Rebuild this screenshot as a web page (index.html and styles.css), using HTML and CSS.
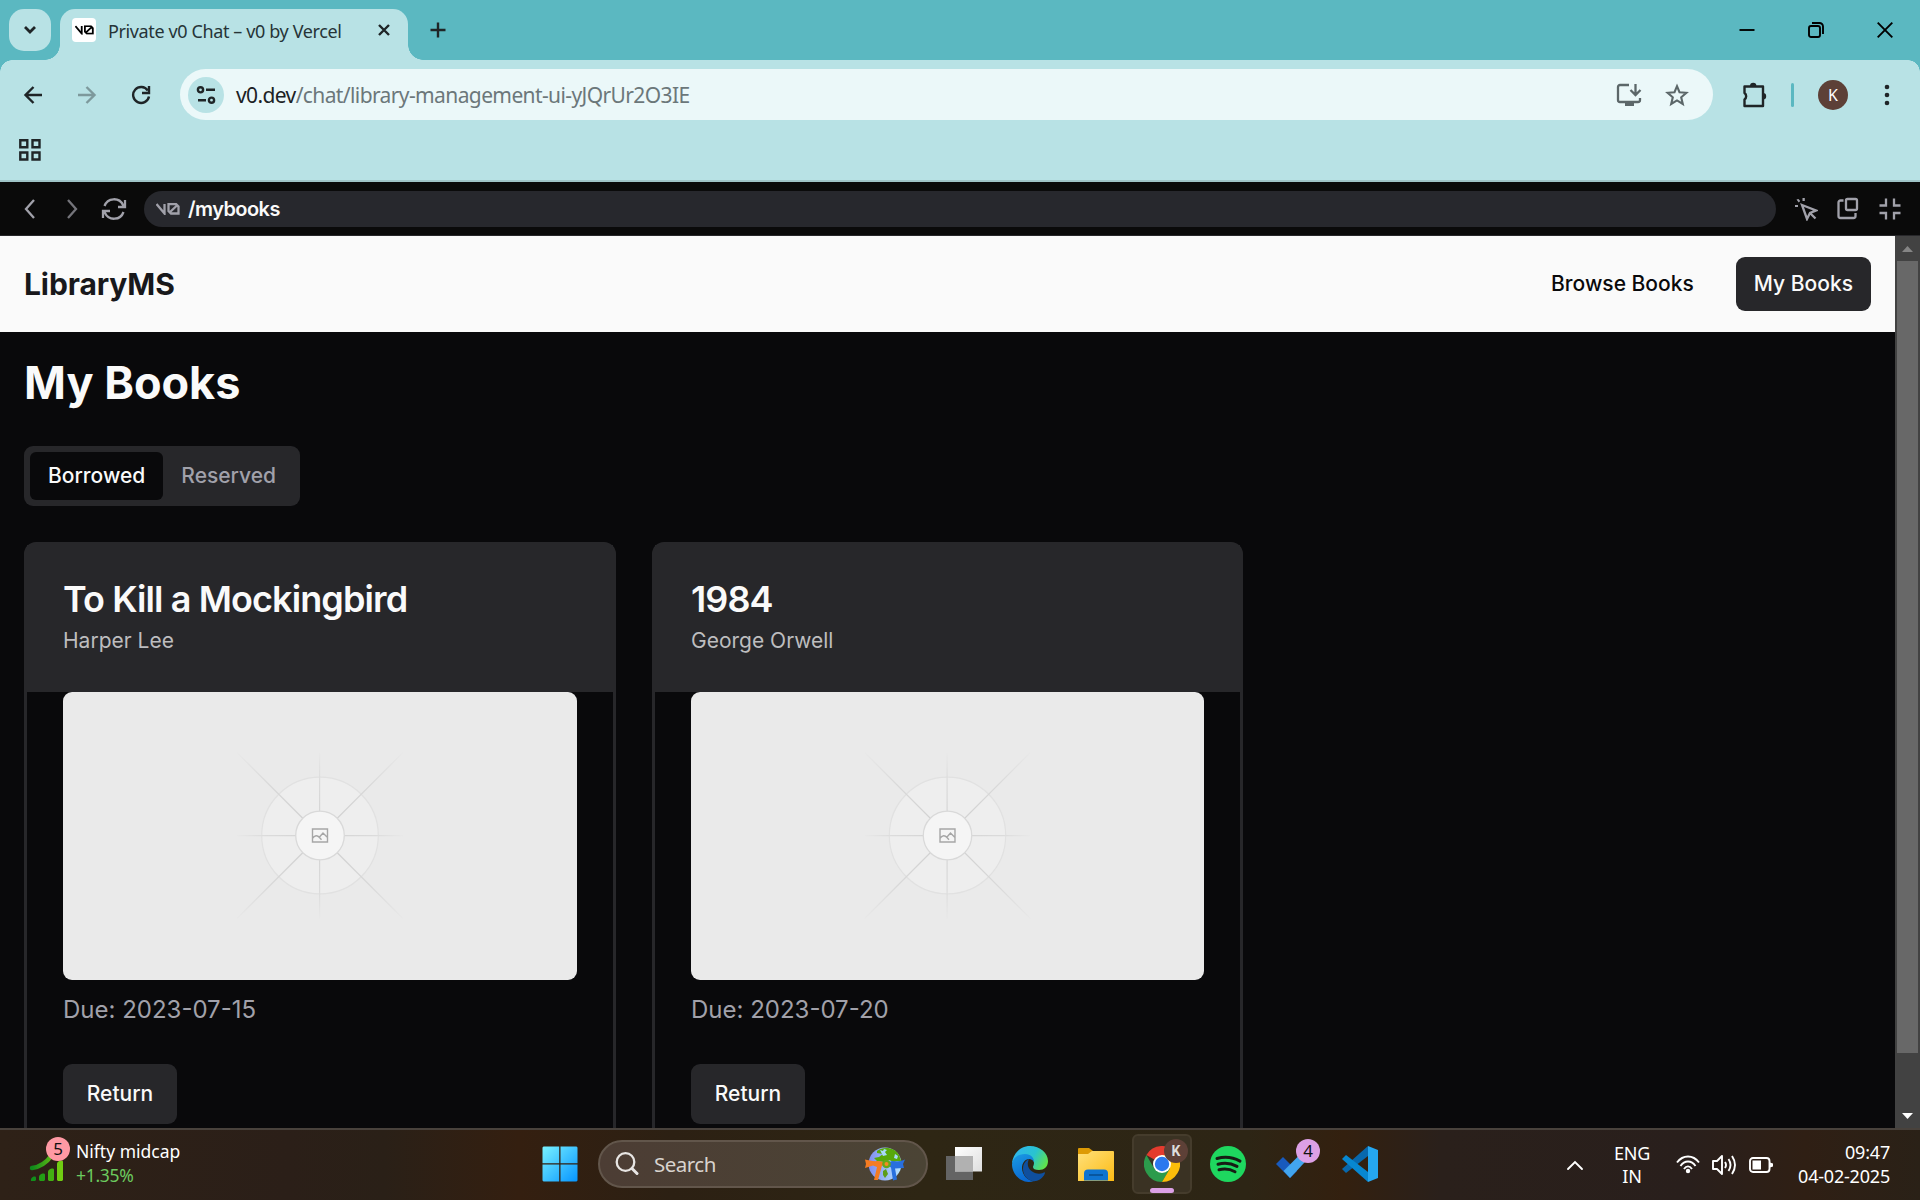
FILE: index.html
```html
<!DOCTYPE html>
<html lang="en">
<head>
<meta charset="utf-8">
<title>My Books</title>
<link rel="stylesheet" href="styles.css">
</head>
<body>
<svg class="defs" width="0" height="0" aria-hidden="true">
  <defs>
    <radialGradient id="ray" gradientUnits="userSpaceOnUse" cx="257" cy="144" r="118"><stop offset=".2" stop-color="#d2d2d2"/><stop offset=".6" stop-color="#d9d9d9"/><stop offset="1" stop-color="#e9e9e9"/></radialGradient>
    <radialGradient id="rayShort" gradientUnits="userSpaceOnUse" cx="257" cy="144" r="84"><stop offset=".3" stop-color="#d6d6d6"/><stop offset=".65" stop-color="#dbdbdb"/><stop offset="1" stop-color="#e9e9e9"/></radialGradient>
    <symbol id="cover" viewBox="0 0 514 288">
      <rect width="514" height="288" fill="#eaeaea"/>
      <circle cx="257" cy="143.500" r="58.3" fill="#eeeeee" stroke="#e1e1e1" stroke-width="1.2"/>
      <path d="M174 60.500 340 226.500M340 60.500 174 226.500" stroke="url(#ray)" stroke-width="1.3"/>
      <path d="M256 61h1.200v166h-1.200zM174 143h166v1.200H174z" fill="url(#rayShort)"/>
      <circle cx="257" cy="143.500" r="24.3" fill="#f5f5f5" stroke="#d9d9d9" stroke-width="1.3"/>
      <path d="M249.5 137h15v13h-15zM249.5 146.500c2-3.500 5-3.500 7-1l2 2.200M256.500 145l3.500-4 4.500 4.500" fill="none" stroke="#a6a6a6" stroke-width="1.4"/>
    </symbol>
    <symbol id="v0" viewBox="0 0 24 12"><path d="M.5 1 8.500 10.500V1M12.500 1H20l2.500 2.500V10.500H15l-2.500-2.500ZM13 10 22 1.500" fill="none" stroke="currentColor" stroke-width="2.300"/></symbol>
  </defs>
</svg>

<header class="tabstrip">
  <button class="tab-search"><svg width="14" height="10" viewBox="0 0 14 10"><path d="m2 2 5 5 5-5" class="s3"/></svg></button>
  <div class="tab">
    <span class="favicon"><svg width="19" height="10" viewBox="0 0 24 12"><use href="#v0"/></svg></span>
    <span class="tab-title">Private v0 Chat – v0 by Vercel</span>
    <svg class="tab-close" width="14" height="14" viewBox="0 0 14 14"><path d="m2 2 10 10M12 2 2 12" class="s25"/></svg>
  </div>
  <svg class="new-tab" width="16" height="16" viewBox="0 0 16 16"><path d="M8 .5v15M.5 8h15" class="s25"/></svg>
  <div class="window-controls">
    <svg width="16" height="16" viewBox="0 0 16 16"><path d="M.5 8h15" class="k2"/></svg>
    <svg width="16" height="16" viewBox="0 0 16 16"><rect x="1" y="4" width="11" height="11" rx="2" class="k2"/><path d="M4 1h7.500a3.500 3.500 0 0 1 3.500 3.500V12" class="k2"/></svg>
    <svg width="16" height="16" viewBox="0 0 16 16"><path d="m.7.700 14.600 14.600M15.300.700.700 15.300" class="k2"/></svg>
  </div>
</header>

<section class="toolbar">
  <div class="address-row">
    <svg class="nav-icon" width="20" height="20" viewBox="0 0 20 20"><path d="M19 10H3M10.500 2l-8 8 8 8" class="s25"/></svg>
    <svg class="nav-icon dim" width="20" height="20" viewBox="0 0 20 20"><path d="M1 10h16M9.500 2l8 8-8 8" class="s25"/></svg>
    <svg class="nav-icon reload" width="20" height="20" viewBox="0 0 20 20"><path d="M16.800 5.500A8 8 0 1 0 18 11.500" class="s25"/><path d="M18 1v7h-7" class="s25"/></svg>
    <div class="omnibox">
      <span class="site-info"><svg width="20" height="20" viewBox="0 0 20 20"><g class="s25"><circle cx="4.500" cy="4.800" r="2.600"/><path d="M10 4.800h9M2 15.200h8"/><circle cx="15.500" cy="15.200" r="2.600"/></g></svg></span>
      <span class="url"><b>v0.dev</b>/chat/library-management-ui-yJQrUr2O3IE</span>
      <svg class="install" width="26" height="24" viewBox="0 0 26 24"><path d="M13 2H4a2 2 0 0 0-2 2v13a2 2 0 0 0 2 2h18a2 2 0 0 0 2-2v-2M19.500 1v10M14.500 7l5 5 5-5" class="g25"/><path d="M9 19h9v4H9z" fill="#5c6769"/></svg>
      <svg class="star" width="24" height="24" viewBox="0 0 24 24"><path d="m12 3.200 2.500 6 6.900.600-5.200 4.500 1.600 6.700-5.800-3.600L6.200 21l1.600-6.700-5.200-4.500 6.900-.6Z" fill="none" stroke="#5c6769" stroke-width="2.100"/></svg>
    </div>
    <svg class="puzzle" width="26" height="26" viewBox="0 0 26 26"><path d="M3.500 4.500h18.500v19.500h-18.500v-6.500a4 4 0 0 0 0-6.500z" class="s25" stroke-linejoin="round"/><path d="M9 4a3.200 3.200 0 0 1 6.400 0zM22 11a3.200 3.200 0 0 1 0 6.400z" fill="#1f2527"/></svg>
    <i class="divider"></i>
    <span class="avatar">K</span>
    <svg class="dots" width="6" height="22" viewBox="0 0 6 22"><g fill="#1f2527"><circle cx="3" cy="3" r="2.300"/><circle cx="3" cy="11" r="2.300"/><circle cx="3" cy="19" r="2.300"/></g></svg>
  </div>
  <svg class="apps" width="22" height="22" viewBox="0 0 22 22"><path d="M1.300 1.300h7v7h-7zM13.500 1.300h7v7h-7zM1.300 13.500h7v7h-7zM13.500 13.500h7v7h-7z" class="s25"/></svg>
</section>

<section class="preview-bar">
  <svg class="pv-back" width="12" height="20" viewBox="0 0 12 20"><path d="m10 1-8 9 8 9" class="p2"/></svg>
  <svg class="pv-forward" width="12" height="20" viewBox="0 0 12 20"><path d="m2 1 8 9-8 9" class="p2"/></svg>
  <svg class="pv-refresh" width="26" height="22" viewBox="0 0 26 22"><path d="M3.500 8A10 10 0 0 1 22 7l2 2M24 2v7h-7M22.500 14A10 10 0 0 1 4 15l-2-2M2 20v-7h7" class="p2"/></svg>
  <div class="preview-path"><svg width="24" height="12" viewBox="0 0 24 12"><use href="#v0"/></svg><span>/mybooks</span></div>
  <div class="preview-tools">
    <svg width="24" height="24" viewBox="0 0 24 24"><path d="m8 8 14 5.500-6 2.500-3 6Z M16 16l5.500 5.500" class="p2"/><path d="M1 8h3v2H1zM8.500 1h2.300v3H8.500zM2.500 2.500 4.500 2l1.700 2-1.500 1.500z" fill="#a1a1aa"/></svg>
    <svg width="24" height="24" viewBox="0 0 24 24"><rect x="10" y="2" width="11" height="11" rx="1.500" class="p2"/><path d="M7.500 3.500H4.500a2 2 0 0 0-2 2V19a2 2 0 0 0 2 2h13a2 2 0 0 0 2-2v-3" class="p2"/></svg>
    <svg width="24" height="24" viewBox="0 0 24 24"><path d="M1.500 8.500h6.500v-7M22.500 8.500H16v-7M1.500 16h6.500v6.500M22.500 16H16v6.500" class="p2"/></svg>
  </div>
</section>

<div class="viewport">
  <main class="app">
    <nav class="app-nav">
      <strong class="brand">LibraryMS</strong>
      <a class="nav-link">Browse Books</a>
      <a class="nav-link active">My Books</a>
    </nav>
    <h1>My Books</h1>
    <div class="tabs"><span class="on">Borrowed</span><span>Reserved</span></div>
    <div class="cards">
      <article class="card">
        <header><h2>To Kill a Mockingbird</h2><p>Harper Lee</p></header>
        <div class="card-body">
          <svg class="cover" viewBox="0 0 514 288" preserveAspectRatio="none"><use href="#cover"/></svg>
          <p class="due">Due: 2023-07-15</p>
          <button class="return">Return</button>
        </div>
      </article>
      <article class="card">
        <header><h2>1984</h2><p>George Orwell</p></header>
        <div class="card-body">
          <svg class="cover" viewBox="0 0 514 288" preserveAspectRatio="none"><use href="#cover"/></svg>
          <p class="due">Due: 2023-07-20</p>
          <button class="return">Return</button>
        </div>
      </article>
    </div>
  </main>
  <aside class="scrollbar">
    <svg width="11" height="6" viewBox="0 0 11 6"><path d="M0 6 5.500 0 11 6z" fill="#858585"/></svg>
    <i class="thumb"></i>
    <svg width="11" height="6" viewBox="0 0 11 6"><path d="M0 0h11L5.500 6z" fill="#fff"/></svg>
  </aside>
</div>

<footer class="taskbar">
  <div class="widget">
    <div class="widget-icon">
      <svg width="34" height="26" viewBox="0 0 34 26"><defs><linearGradient id="bars"><stop offset="0" stop-color="#0f8a1b"/><stop offset="1" stop-color="#5cb916"/></linearGradient></defs><path d="M2 11C10 10 17 5 22-2" fill="none" stroke="url(#bars)" stroke-width="4.500" stroke-linecap="round"/><path d="M1 24c-1-4 5-6 5-3v2l-1 1z" fill="#118f1b"/><path d="M9 23v-3c0-3 6-5 6-2v5l-1 1h-4z" fill="#239e15"/><path d="M18 23v-8c0-3 6-5 6-2v10l-1 1h-4z" fill="#43af12"/><path d="M27 23V7c0-3 6-5 6-2v18l-1 1h-4z" fill="#70cc12"/></svg>
      <span class="badge pink">5</span>
    </div>
    <div class="widget-text"><span>Nifty midcap</span><span class="up">+1.35%</span></div>
  </div>
  <div class="dock">
    <span class="slot start"><svg width="36" height="36" viewBox="0 0 36 36"><defs><linearGradient id="win" gradientUnits="userSpaceOnUse" x1="0" y1="0" x2="36" y2="36"><stop offset="0" stop-color="#7af3ff"/><stop offset="1" stop-color="#0493ff"/></linearGradient></defs><path d="M1.500.500h15.700v16.700H.500V1.500zM18.500.500h16l1 1v15.700h-17zM.500 18.500h16.700v17H1.500l-1-1zM18.500 18.500h17v16l-1 1h-16z" fill="url(#win)"/></svg></span>
    <div class="search">
      <svg width="24" height="24" viewBox="0 0 24 24"><circle cx="10.500" cy="10" r="8.800" fill="none" stroke="#e8e6e4" stroke-width="2.300"/><path d="m17 16.500 5 5" stroke="#e8e6e4" stroke-width="3" stroke-linecap="round"/></svg>
      <span>Search</span>
      <svg class="globe" width="40" height="36" viewBox="0 0 40 36"><defs><linearGradient id="sea"><stop offset="0" stop-color="#7f8df0"/><stop offset="1" stop-color="#b6e4ff"/></linearGradient></defs><circle cx="20" cy="18" r="16.500" fill="url(#sea)"/><path d="M12 5C18 0 30 1 34 9l2.500 7-4.500-1-3 1-5-2-5 2-7-1-3-3 5-1 4-3-6-1z" fill="#57a80b"/><path d="m15 4 3 1 1-2 3 1-2 2 2 3-4 1zM30 8l3 2-1 3-3-1z" fill="#a8d9fb"/><path d="M0 13.500c3 1 9 2 13 1.500l11 2 1 3-8-.500-4 14.500h-1-3l3-13-4-1.500L0 22l1-4z" fill="#f57c22"/><path d="M40 13.500c-4 2-8 2-13 1.500l-7 3 6 3.500 2 13 4-1-2-11 9-.5-1-4z" fill="#286fde"/><circle cx="21.500" cy="18" r="4.300" fill="#65a81a"/><circle cx="21.500" cy="18" r="2" fill="#f58b22"/><path d="m18 25 3-2 2 5-3 4-2-3z" fill="#5d9d1c"/></svg>
    </div>
    <span class="slot"><svg width="36" height="36" viewBox="0 0 36 36"><defs><linearGradient id="pane" x2="1" y2="1"><stop offset="0" stop-color="#fff"/><stop offset="1" stop-color="#dedede"/></linearGradient></defs><path d="M0 10h27v24H0z" fill="#646464"/><path d="M9 1h27v24.500H9z" fill="url(#pane)"/><path d="M9 10h18v15H9z" fill="#b1b1b1"/></svg></span>
    <span class="slot"><svg width="36" height="36" viewBox="0 0 36 36"><defs><linearGradient id="e1" x1="0" y1=".3" x2="1" y2=".7"><stop offset="0" stop-color="#2fb5ee"/><stop offset=".55" stop-color="#29c3d0"/><stop offset="1" stop-color="#62e445"/></linearGradient><linearGradient id="e2" x2=".4" y2="1"><stop offset="0" stop-color="#1a9ce4"/><stop offset="1" stop-color="#0a68d1"/></linearGradient></defs><path d="M0 17C1 7 9 0 18 0c10 0 18 7 18 15 0 6-4 9-9 9-4 0-6-1-6-3 0-1 1-2 1-4 0-3-3-5-7-5-6 0-12 3-15 5z" fill="url(#e1)"/><path d="M0 18C1 11 7 8 13 8c6 0 9 4 9 8-1-2-3-3-5-3-4 0-7 4-7 9 0 7 6 13 12 13-12 4-22-6-22-17z" fill="url(#e2)"/><path d="M17 13c-4 2-6 5-6 10 0 8 7 13 13 12 5-1 8-5 9-8 0-1-1-1-2 0-3 1-7 1-10-1-4-2-7-7-4-13z" fill="#0f4f9e"/></svg></span>
    <span class="slot"><svg width="36" height="36" viewBox="0 0 36 36"><defs><linearGradient id="fold" x2="1" y2="1"><stop offset="0" stop-color="#ffe07a"/><stop offset="1" stop-color="#fcbb15"/></linearGradient></defs><path d="M0 10V3q0-1 1-1h10l4 3v5z" fill="#dd9a05"/><path d="M0 8h10l4-3h21q1 0 1 1v29H0z" fill="url(#fold)"/><path d="M6 34.500v-7q0-4 4-4h16q4 0 4 4v7z" fill="#0f74d0"/><path d="M11 29h14" stroke="#074f92" stroke-width="1.600"/></svg></span>
    <span class="slot current"><svg width="36" height="36" viewBox="0 0 36 36"><path d="M18 18 2.400 9a18 18 0 0 1 31.200 0z" fill="#e33b2e"/><path d="M2.400 9l7.800 13.500 16 0L18 36A18 18 0 0 1 2.400 9" fill="#2c9b4c"/><path d="M18 9h15.600A18 18 0 0 1 18 36l8-13.500z" fill="#fbbd0a"/><circle cx="18" cy="18" r="9" fill="#fff"/><circle cx="18" cy="18" r="7.200" fill="#2b78ee"/></svg><span class="badge brown">K</span></span>
    <span class="slot"><svg width="36" height="36" viewBox="0 0 36 36"><circle cx="18" cy="18" r="18" fill="#1ed75f"/><path d="M7 12.500c8-2.200 16-1.200 23 2.600M8 18.300c7-1.900 13-1.100 19 2.100M9 23.800c6-1.500 11-.800 16 1.900" fill="none" stroke="#171c14" stroke-width="3" stroke-linecap="round"/></svg></span>
    <span class="slot"><svg width="36" height="36" viewBox="0 0 36 36"><path d="m0 18 7-7 14 14-7 7z" fill="#185abd"/><path d="m7.500 25 22-22 6 6-21.500 23z" fill="#42a5ee"/></svg><span class="badge lilac">4</span></span>
    <span class="slot"><svg width="36" height="36" viewBox="0 0 36 36"><path d="M0 23 26 0v10L4 27z" fill="#0868ad"/><path d="m0 13 4-4 22 17v10z" fill="#0787d1"/><path d="M26 0l10 4v28l-10 4z" fill="#25a7f0"/></svg></span>
  </div>
  <div class="tray">
    <svg class="chev" width="18" height="12" viewBox="0 0 18 12"><path d="m2 10 7-7 7 7" class="w2" stroke-linecap="round"/></svg>
    <div class="lang"><span>ENG</span><span>IN</span></div>
    <div class="status">
      <svg width="24" height="20" viewBox="0 0 24 20"><path d="M1 7.500C7-.500 17-.500 23 7.500M4.500 11c4-6 11-6 15 0M8 14c2.500-3.500 5.500-3.500 8 0" class="w2"/><circle cx="12" cy="16" r="2.200" fill="#fff"/></svg>
      <svg width="25" height="22" viewBox="0 0 25 22"><path d="M1 7h4l5-5v18l-5-5H1zM13 8q2 3 0 6M16.500 5q4 6 0 12M20 2q6 9 0 18" class="w2" stroke-linejoin="round"/></svg>
      <svg width="24" height="16" viewBox="0 0 24 16"><rect x="1" y="1" width="19.500" height="14" rx="3" class="w2"/><path d="M3.500 3.500h8.500v9H3.500zM21 5.500l3 1v3l-3 1z" fill="#fff"/></svg>
    </div>
    <div class="clock"><span>09:47</span><span>04-02-2025</span></div>
  </div>
</footer>
</body>
</html>
```
FILE: styles.css
```css
* { box-sizing: border-box; }
body { margin: 0; width: 1920px; height: 1200px; overflow: hidden; display: flex; flex-direction: column; background: #09090b; font-family: "Noto Sans", "Open Sans", sans-serif; }
.defs { position: absolute; }
h1, h2, p { margin: 0; }
button { border: 0; padding: 0; font: inherit; }
svg { display: block; flex: none; }
.s25 { fill: none; stroke: #1f2527; stroke-width: 2.4; }
.s3 { fill: none; stroke: #1f2527; stroke-width: 2.8; }
.g25 { fill: none; stroke: #5c6769; stroke-width: 2.3; }
.k2 { fill: none; stroke: #000; stroke-width: 1.9; }
.p2 { fill: none; stroke: #a1a1aa; stroke-width: 2.3; }
.w2 { fill: none; stroke: #fff; stroke-width: 1.9; }

/* Browser tab strip */
.tabstrip { height: 60px; flex: none; display: flex; align-items: flex-start; padding: 9px 0 0 9px; background: #5bb8c1; }
.tab-search { width: 42px; height: 42px; border-radius: 15px; background: #b8e2e5; display: grid; place-items: center; }
.tab { position: relative; width: 348px; height: 51px; margin-left: 9px; padding: 9px 17px 0 12px; display: flex; align-items: flex-start; background: #b8e2e5; border-radius: 15px 15px 0 0; }
.tab::before, .tab::after { content: ""; position: absolute; bottom: 0; width: 15px; height: 15px; }
.tab::before { left: -15px; background: radial-gradient(circle at 0 0, transparent 14.5px, #b8e2e5 15px); }
.tab::after { right: -15px; background: radial-gradient(circle at 100% 0, transparent 14.5px, #b8e2e5 15px); }
.favicon { width: 24px; height: 24px; border-radius: 4px; background: #fff; color: #000; display: grid; place-items: center; }
.tab-title { margin-left: 12px; font-size: 18px; line-height: 26px; letter-spacing: -.38px; color: #263437; white-space: nowrap; }
.tab-close { margin: 5px 0 0 auto; }
.new-tab { margin: 13px 0 0 22px; }
.window-controls { margin: 13px 27px 0 auto; display: flex; gap: 53px; }

.toolbar { height: 122px; flex: none; border-bottom: 2px solid #9fc4c7; background: radial-gradient(circle at 12px 12px, #b8e2e5 11.5px, #5bb8c1 12px) 0 0 / 12px 12px no-repeat, radial-gradient(circle at 0 12px, #b8e2e5 11.5px, #5bb8c1 12px) 100% 0 / 12px 12px no-repeat, #b8e2e5; }
.address-row { height: 69px; display: flex; align-items: center; padding: 0 30px 0 23px; }
.nav-icon { margin-right: 34px; }
.nav-icon.reload { margin-right: 29px; }
.nav-icon.dim { opacity: .38; }
.omnibox { width: 1533px; height: 51px; border-radius: 26px; background: #ebf8f9; display: flex; align-items: center; padding: 0 24px 0 8px; }
.site-info { width: 36px; height: 36px; border-radius: 50%; background: #b8e2e5; display: grid; place-items: center; }
.url { margin-left: 12px; font-size: 21px; line-height: 28px; letter-spacing: -.61px; color: #6b777a; white-space: nowrap; }
.url b { font-weight: 400; color: #1b2224; }
.install { margin-left: auto; }
.star { margin-left: 23px; }
.puzzle { margin-left: 28px; }
.divider { width: 3px; height: 24px; margin-left: 24px; background: #5bb8c1; border-radius: 2px; }
.avatar { width: 30px; height: 30px; margin-left: 24px; border-radius: 50%; background: #5d4037; color: #fff; font-size: 16px; line-height: 30px; text-align: center; }
.dots { margin-left: 36px; }
.apps { margin: 10px 0 0 19px; }

/* Preview bar */
.preview-bar { height: 54px; flex: none; display: flex; align-items: center; padding: 0 18px 0 24px; background: #0a0a0a; border-bottom: 1px solid #27272a; }
.pv-forward { margin-left: 30px; opacity: .7; }
.pv-refresh { margin-left: 23px; }
.preview-path { width: 1632px; height: 36px; margin-left: 17px; border-radius: 18px; background: #27282d; display: flex; align-items: center; padding-left: 12px; color: #a1a1aa; }
.preview-path span { margin-left: 8px; font: 600 20px/30px Inter, sans-serif; letter-spacing: -.55px; color: #fafafa; }
.preview-tools { margin-left: auto; display: flex; gap: 18px; }

/* Library application */
.viewport { flex: 1; min-height: 0; display: flex; }
.app { width: 1895px; overflow: hidden; font-family: Inter, sans-serif; color: #fafafa; }
.app-nav { height: 96px; display: flex; align-items: center; padding: 0 24px; background: #fafafa; }
.brand { margin-right: auto; font-size: 30px; font-weight: 700; line-height: 42px; letter-spacing: -.1px; color: #18181b; }
.nav-link { height: 54px; padding: 0 18px; border-radius: 9px; font-size: 21px; font-weight: 500; line-height: 54px; color: #09090b; }
.nav-link.active { margin-left: 24px; background: #27272a; color: #fafafa; }
h1 { margin: 24px 0 0 24px; font-size: 45px; line-height: 54px; font-weight: 700; }
.tabs { width: 276px; height: 60px; margin: 36px 0 36px 24px; padding: 6px; display: flex; border-radius: 9px; background: #27272a; }
.tabs span { padding: 0 18px; border-radius: 6px; font-size: 21px; font-weight: 500; line-height: 48px; color: #a1a1aa; }
.tabs .on { background: #09090b; color: #fafafa; }
.cards { display: grid; grid-template-columns: 592px 591px; gap: 36px; padding-left: 24px; }
.card { height: 700px; border: 3px solid #27272a; border-radius: 12px; }
.card header { height: 147px; padding: 36px; background: #27272a; }
.card h2 { font-size: 36px; line-height: 36px; font-weight: 600; letter-spacing: -.9px; }
.card header p { margin-top: 9px; font-size: 21px; line-height: 30px; color: #bdbdbf; }
.card-body { padding: 0 36px; }
.cover { width: 100%; height: 288px; border-radius: 9px; }
.due { margin-top: 12px; font-size: 24px; line-height: 36px; color: #a1a1aa; }
.return { width: 114px; height: 60px; margin-top: 36px; padding-bottom: 1px; border-radius: 9px; background: #27272a; color: #fafafa; font-size: 21px; font-weight: 500; }
.scrollbar { width: 25px; background: #424242; display: flex; flex-direction: column; align-items: center; padding: 10px 0 9px; }
.thumb { width: 21px; height: 792px; margin-top: 9px; background: #686868; }
.scrollbar svg:last-child { margin-top: auto; }

/* Desktop taskbar */
.taskbar { height: 72px; flex: none; display: grid; grid-template-columns: 530px 860px 1fr; border-top: 2px solid #49423c; background: linear-gradient(90deg, #2e2117 0%, #2b1f18 15%, #2a2017 20%, #341f10 27%, #2c2013 35%, #2e2614 48%, #2d2515 65%, #33200f 70%, #2a201b 75%, #291f1c 88%, #2f1f14 94%, #2a2117 100%); color: #fff; font-size: 18px; }
.widget { display: flex; padding: 9px 0 0 30px; }
.widget-icon { position: relative; width: 36px; padding-top: 18px; }
.widget-icon svg { overflow: visible; }
.badge { position: absolute; width: 24px; height: 24px; border-radius: 50%; color: #111; text-align: center; font-size: 17px; line-height: 24px; }
.widget-icon .badge { left: 16px; top: -2px; }
.pink { background: #ff99a4; }
.lilac { right: 4px; top: 5px; background: #dca0e6; }
.brown { background: #5d4037; color: #ddd; font: 700 14px/24px Roboto, sans-serif; }
.widget-text { margin-left: 10px; display: flex; flex-direction: column; line-height: 24px; font-size: 17.5px; }
.widget-text .up { color: #6ccb5f; letter-spacing: -.3px; }
.dock { display: flex; align-items: center; gap: 6px; height: 68px; }
.slot { position: relative; width: 60px; height: 60px; border-radius: 6px; display: grid; place-items: center; }
.start { margin-right: 2px; }
.current { background: #3a3223; border: 2px solid #453c2c; }
.current .badge { right: 2px; top: 3px; }
.current::after { content: ""; position: absolute; left: 16px; bottom: -1px; width: 24px; height: 5px; border-radius: 3px; background: #dca0e6; }
.search { width: 330px; height: 48px; border-radius: 24px; border: 2px solid #62564b; background: linear-gradient(90deg, #4c3d34, #4b4435); display: flex; align-items: center; padding: 0 21px 0 15px; color: #d8d3ce; font-size: 20.5px; letter-spacing: -.5px; }
.search span { margin-left: 15px; }
.globe { margin-left: auto; }
.tray { display: flex; align-items: center; height: 69px; padding-right: 30px; letter-spacing: -.2px; }
.chev { margin-left: 176px; }
.lang { width: 50px; margin-left: 23px; display: flex; flex-direction: column; align-items: center; line-height: 23px; }
.status { margin-left: 19px; display: flex; align-items: center; gap: 12px; }
.clock { margin: -2px 0 0 auto; display: flex; flex-direction: column; align-items: flex-end; line-height: 24px; }
```
